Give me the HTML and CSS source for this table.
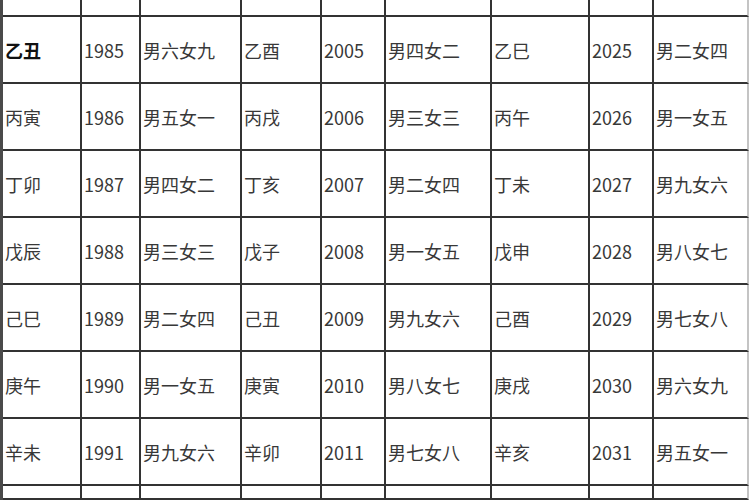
FILE: index.html
```html
<!DOCTYPE html>
<html lang="zh">
<head>
<meta charset="utf-8">
<title>年份男女表</title>
<link rel="stylesheet" href="styles.css">
</head>
<body>
<div class="sheet">
  <div class="c"></div><div class="c"></div><div class="c"></div><div class="c"></div><div class="c"></div><div class="c"></div><div class="c"></div><div class="c"></div><div class="c last"></div>

  <div class="c strong">乙丑</div><div class="c">1985</div><div class="c">男六女九</div><div class="c">乙酉</div><div class="c">2005</div><div class="c">男四女二</div><div class="c">乙巳</div><div class="c">2025</div><div class="c last">男二女四</div>

  <div class="c">丙寅</div><div class="c">1986</div><div class="c">男五女一</div><div class="c">丙戌</div><div class="c">2006</div><div class="c">男三女三</div><div class="c">丙午</div><div class="c">2026</div><div class="c last">男一女五</div>

  <div class="c">丁卯</div><div class="c">1987</div><div class="c">男四女二</div><div class="c">丁亥</div><div class="c">2007</div><div class="c">男二女四</div><div class="c">丁未</div><div class="c">2027</div><div class="c last">男九女六</div>

  <div class="c">戊辰</div><div class="c">1988</div><div class="c">男三女三</div><div class="c">戊子</div><div class="c">2008</div><div class="c">男一女五</div><div class="c">戊申</div><div class="c">2028</div><div class="c last">男八女七</div>

  <div class="c">己巳</div><div class="c">1989</div><div class="c">男二女四</div><div class="c">己丑</div><div class="c">2009</div><div class="c">男九女六</div><div class="c">己酉</div><div class="c">2029</div><div class="c last">男七女八</div>

  <div class="c">庚午</div><div class="c">1990</div><div class="c">男一女五</div><div class="c">庚寅</div><div class="c">2010</div><div class="c">男八女七</div><div class="c">庚戌</div><div class="c">2030</div><div class="c last">男六女九</div>

  <div class="c">辛未</div><div class="c">1991</div><div class="c">男九女六</div><div class="c">辛卯</div><div class="c">2011</div><div class="c">男七女八</div><div class="c">辛亥</div><div class="c">2031</div><div class="c last">男五女一</div>

  <div class="c"></div><div class="c"></div><div class="c"></div><div class="c"></div><div class="c"></div><div class="c"></div><div class="c"></div><div class="c"></div><div class="c last"></div>
</div>
</body>
</html>
```

FILE: styles.css
```css
html, body {
  margin: 0;
  padding: 0;
  background: #ffffff;
  overflow: hidden;
}

.sheet {
  width: 749px;
  height: 500px;
  box-sizing: border-box;
  border-left: 3px solid #4a4a4a;
  display: grid;
  grid-template-columns: 79px 59px 101px 80px 64px 106px 98px 64px 95px;
  grid-template-rows: 17px repeat(7, 67px) 14px;
  font-family: "Noto Sans CJK SC", "Noto Sans", sans-serif;
  font-size: 18px;
  color: #383838;
}

.c {
  box-sizing: border-box;
  border-right: 2px solid #333333;
  border-bottom: 2px solid #333333;
  display: flex;
  align-items: center;
  padding-left: 2px;
  white-space: nowrap;
  overflow: hidden;
}

.c.last {
  border-right-color: #c4c4c4;
}

.c.strong {
  font-weight: 700;
  color: #111111;
}
```
